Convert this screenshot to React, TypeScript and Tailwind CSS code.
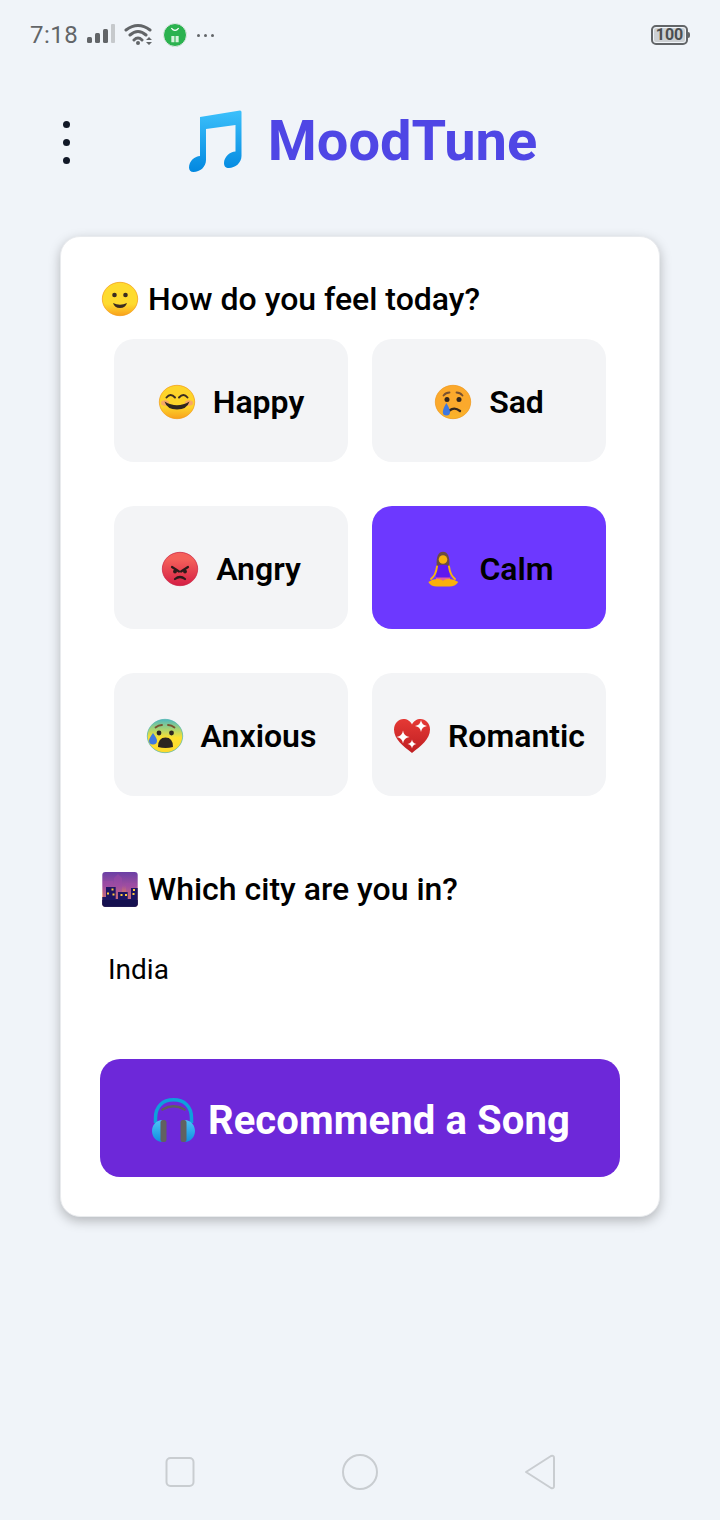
const ROBOTO = "font-['Roboto',sans-serif]";

function Face({ id, from, to, stroke, mid = 0.65, children }: { id: string; from: string; to: string; stroke: string; mid?: number; children: React.ReactNode }) {
  return (
    <svg viewBox="0 0 38 38" className="h-[38px] w-[38px] shrink-0">
      <defs>
        <linearGradient id={id} x1="0" y1="0" x2="0" y2="1">
          <stop offset="0" stopColor={from} />
          <stop offset={mid} stopColor={from} />
          <stop offset="1" stopColor={to} />
        </linearGradient>
      </defs>
      <ellipse cx="19" cy="19" rx="17.7" ry="16.7" fill={`url(#${id})`} stroke={stroke} strokeWidth="0.7" />
      {children}
    </svg>
  );
}

function Smile() {
  return (
    <Face id="smile" from="#fedb2f" to="#f9a11b" stroke="#f29a12">
      <circle cx="13.5" cy="15" r="2.3" fill="#3a2c20" />
      <circle cx="24.5" cy="15" r="2.3" fill="#3a2c20" />
      <path d="M12 23q7 3.500 14 0q-1.500 5-7 5t-7-5z" fill="#3a2c20" />
    </Face>
  );
}

function HappyFace() {
  return (
    <Face id="happy" from="#fdd42a" to="#f8a11c" stroke="#f29a12">
      <ellipse cx="7" cy="20" rx="4" ry="2.800" fill="#f59a7a" opacity="0.75" />
      <ellipse cx="31" cy="20" rx="4" ry="2.800" fill="#f59a7a" opacity="0.75" />
      <path d="M8.500 14.500q4-5 8.500 0M21 14.500q4.500-5 8.500 0" fill="none" stroke="#3a2c20" strokeWidth="2" strokeLinecap="round" />
      <path d="M6.500 18.500q12.500 7.500 25 0q-2.500 8-12.500 8t-12.500-8z" fill="#2f2620" />
    </Face>
  );
}

function SadFace() {
  return (
    <Face id="sad" from="#fba92c" to="#f9b52a" stroke="#ef9514">
      <path d="M9.500 12.500q2.500-3 6-3M28.500 12.500q-2.500-3-6-3" fill="none" stroke="#7a5230" strokeWidth="1.800" strokeLinecap="round" />
      <circle cx="13" cy="16.500" r="2.500" fill="#33261d" />
      <circle cx="25" cy="16.500" r="2.500" fill="#33261d" />
      <path d="M15.500 27.500q5-4 10.500 .5" fill="none" stroke="#33261d" strokeWidth="2.400" strokeLinecap="round" />
      <path d="M12.400 20q-3.600 6-3.600 9a3.600 3.600 0 0 0 7.200 0q0-3-3.600-9z" fill="#3f78e0" />
    </Face>
  );
}

function AngryFace() {
  return (
    <Face id="angry" from="#f4605a" to="#d51f45" stroke="#c8203f" mid={0.2}>
      <path d="M11 17l7 4.500M27 17l-7 4.500" stroke="#2c1a1a" strokeWidth="2.200" strokeLinecap="round" />
      <circle cx="14" cy="21.500" r="1.900" fill="#2c1a1a" />
      <circle cx="24" cy="21.500" r="1.900" fill="#2c1a1a" />
      <path d="M14 29q5-4 10 0" fill="none" stroke="#2c1a1a" strokeWidth="2.200" strokeLinecap="round" />
    </Face>
  );
}

function AnxiousFace() {
  return (
    <svg viewBox="0 0 38 38" className="h-[38px] w-[38px] shrink-0">
      <defs>
        <linearGradient id="anx" x1="0" y1="0" x2="0" y2="1">
          <stop offset="0" stopColor="#4fb8bd" />
          <stop offset="0.3" stopColor="#a8d473" />
          <stop offset="0.55" stopColor="#fde02f" />
          <stop offset="1" stopColor="#fdd92c" />
        </linearGradient>
      </defs>
      <ellipse cx="19" cy="19" rx="17.700" ry="16.700" fill="url(#anx)" stroke="#4fb3ae" strokeWidth="0.700" />
      <path d="M9.500 10.500q3-2.500 6.500-2.500M28.500 10.500q-3-2.500-6.500-2.500" fill="none" stroke="#7a5230" strokeWidth="1.800" strokeLinecap="round" />
      <circle cx="13" cy="16" r="2.400" fill="#2d2620" />
      <circle cx="25.500" cy="16" r="2.400" fill="#2d2620" />
      <path d="M12 30q0-9.500 7.500-9.500t7.500 9.500q-7.500 2-15 0z" fill="#2d2620" />
      <path d="M7 16q-4 5.500-4 7.500a4 4 0 0 0 8 0q0-2-4-7.500z" fill="#3f78e0" />
    </svg>
  );
}

function SparkleHeart() {
  const star = (x: number, y: number, r: number) =>
    `M${x} ${y - r}Q${x + r * 0.12} ${y - r * 0.12} ${x + r} ${y}Q${x + r * 0.12} ${y + r * 0.12} ${x} ${y + r}Q${x - r * 0.12} ${y + r * 0.12} ${x - r} ${y}Q${x - r * 0.12} ${y - r * 0.12} ${x} ${y - r}z`;
  return (
    <svg viewBox="0 0 38 38" className="h-[38px] w-[38px] shrink-0">
      <defs>
        <linearGradient id="heart" x1="0" y1="0" x2="0" y2="1">
          <stop offset="0" stopColor="#e53935" />
          <stop offset="1" stopColor="#bf1f22" />
        </linearGradient>
      </defs>
      <path d="M19 36C10 29 1 22 1 12.500C1 6.500 5.500 2 10.500 2C14 2 17.500 4 19 7.500C20.500 4 24 2 27.500 2C32.500 2 37 6.500 37 12.500C37 22 28 29 19 36z" fill="url(#heart)" />
      <path d={star(28, 9, 6)} fill="#fff" />
      <path d={star(10, 20, 6.500)} fill="#fff" />
      <path d={star(19, 27, 4.500)} fill="#fff" />
    </svg>
  );
}

function Meditate() {
  return (
    <svg viewBox="0 0 38 38" className="h-[38px] w-[38px] shrink-0">
      <path d="M12.700 16C12 6 14.500 1.700 19 1.700S26 6 25.300 16z" fill="#6d4c41" />
      <circle cx="19" cy="9.500" r="4.300" fill="#f6b40e" />
      <path d="M13 16q6-2.500 12 0l1 12H12z" fill="#5f18f0" />
      <path d="M12 27.500h14v3H12z" fill="#e05fa3" />
      <path d="M13 16.500Q12 25 7 29" fill="none" stroke="#f6b40e" strokeWidth="2" strokeLinecap="round" />
      <path d="M25 16.500Q26 25 31 29" fill="none" stroke="#f6b40e" strokeWidth="2" strokeLinecap="round" />
      <path d="M4.300 32q7-5 14.700-1.500Q26.700 27 34.300 32q-3 4.500-9 4.500h-12.500q-6 0-8.500-4.500z" fill="#fbb00b" />
    </svg>
  );
}

function City() {
  return (
    <svg viewBox="0 0 38 38" className="h-[38px] w-[38px] shrink-0">
      <defs>
        <linearGradient id="dusk" x1="0" y1="0" x2="0" y2="1">
          <stop offset="0" stopColor="#6a3fa5" />
          <stop offset="0.4" stopColor="#a04f9f" />
          <stop offset="0.75" stopColor="#f58f4a" />
        </linearGradient>
      </defs>
      <rect x="1.300" y="2" width="35.400" height="34.700" rx="3" fill="url(#dusk)" />
      <path d="M2 11h10v19H2zM25 13h10v17H25zM13 8l4-4 4 4v22h-8z" fill="#9c4aa6" opacity="0.55" />
      <path d="M1.300 27H5V17h9.700v12H17V22h9.700v7H30V18h6.700v15.700a3 3 0 0 1-3 3H4.300a3 3 0 0 1-3-3z" fill="#1d1463" />
      <path d="M1.300 30h35.400v3.700a3 3 0 0 1-3 3H4.300a3 3 0 0 1-3-3z" fill="#15104f" />
      <path d="M10.500 18.500h2v2h-2zM6 22.500h2v2H6zM11.500 23.500h2v2h-2zM19.500 24h2v2h-2zM24 24h2v2h-2zM32 19h2v2h-2zM31.500 23h2v2h-2z" fill="#ffc83d" />
    </svg>
  );
}

function NoteIcon() {
  return (
    <svg viewBox="0 0 60 64" className="h-[64px] w-[60px] shrink-0">
      <defs>
        <linearGradient id="note" x1="0" y1="0" x2="0" y2="1">
          <stop offset="0" stopColor="#3cc0fb" />
          <stop offset="1" stopColor="#0288e0" />
        </linearGradient>
      </defs>
      <path
        transform="translate(0 1)"
        d="M15 8L55 1.500Q56.500 1.500 56.500 3V47C56.500 54 50 59 44 59C40.500 59 39 57 39 54C39 48 45 42.500 50.500 42.500V16L21 20V51C21 58 15 63 8.500 63C5.500 63 4 61 4 58.500C4 52 10 47 15 47z"
        fill="url(#note)"
      />
    </svg>
  );
}

function Headphones() {
  return (
    <svg viewBox="0 0 46 46" className="h-[46px] w-[46px] shrink-0">
      <defs>
        <linearGradient id="cup" x1="0" y1="0" x2="0" y2="1">
          <stop offset="0" stopColor="#4fc3f7" />
          <stop offset="1" stopColor="#0f8fe0" />
        </linearGradient>
      </defs>
      <path d="M5.500 26V21C5.500 9 13 2.800 23.500 2.800S41.500 9 41.500 21V26" fill="none" stroke="#0ea0dc" strokeWidth="3.500" />
      <path d="M12.500 12.500Q23.500 6 34.500 12.500" fill="none" stroke="#5f5f5f" strokeWidth="2.500" strokeLinecap="round" />
      <path d="M12.500 23v22C6 45 2 39.500 2 34S6 23 12.500 23zM34.500 23v22c6.500 0 10.500-5.500 10.500-11S41 23 34.500 23z" fill="url(#cup)" />
      <rect x="10.500" y="23" width="6" height="22" rx="2.500" fill="#616161" />
      <rect x="30.500" y="23" width="6" height="22" rx="2.500" fill="#616161" />
    </svg>
  );
}

const moods = [
  { label: "Happy", icon: HappyFace, active: false },
  { label: "Sad", icon: SadFace, active: false },
  { label: "Angry", icon: AngryFace, active: false },
  { label: "Calm", icon: Meditate, active: true },
  { label: "Anxious", icon: AnxiousFace, active: false },
  { label: "Romantic", icon: SparkleHeart, active: false },
];

function StatusBar() {
  return (
    <div className="flex h-[70px] items-center pl-[30px] pr-[30px] text-[#626568]">
      <span className="text-[24px] leading-none tracking-[0.5px]">7:18</span>
      <svg viewBox="0 0 30 22" className="ml-[9px] h-[22px] w-[30px]">
        <rect x="0" y="13" width="5" height="6" rx="1.500" fill="#626568" />
        <rect x="8" y="9" width="5" height="10" rx="1.500" fill="#626568" />
        <rect x="16" y="5" width="5" height="14" rx="1.500" fill="#626568" />
        <rect x="24" y="0" width="4" height="19" rx="1" fill="#c6c9cc" />
      </svg>
      <svg viewBox="0 0 30 24" className="ml-[7px] h-[24px] w-[30px]">
        <path d="M2 7Q14-2 26 7M6 12Q14 5 22 12M10 17Q14 13 18 17" fill="none" stroke="#626568" strokeWidth="3" strokeLinecap="round" />
        <circle cx="14" cy="20" r="2" fill="#626568" />
        <path d="M22 17l3-3 3 3zM22 19h6l-3 3z" fill="#626568" />
      </svg>
      <div className="ml-[9px] flex h-[24px] w-[24px] items-center justify-center rounded-full border border-[#e5e8ea] bg-[#2bb24f]">
        <svg viewBox="0 0 24 24" className="h-[22px] w-[22px]">
          <path d="M8 4.500q4 5 8 0" fill="none" stroke="#fff" strokeWidth="1.300" />
          <path d="M8 13h3.400v7H8zM12.600 13H16v7h-3.400z" fill="#d6f3dc" />
        </svg>
      </div>
      <div className="ml-[10px] flex gap-[4px]">
        <span className="h-[3px] w-[3px] rounded-full bg-[#626568]" />
        <span className="h-[3px] w-[3px] rounded-full bg-[#626568]" />
        <span className="h-[3px] w-[3px] rounded-full bg-[#626568]" />
      </div>
      <div className="ml-auto flex items-center">
        <div className="flex h-[20px] w-[37px] items-center justify-center rounded-[5px] border-2 border-[#626568] p-[1px]">
          <span className="flex h-full w-full items-center justify-center rounded-[2px] bg-[#cdd0d3] text-[16px] font-bold leading-none text-[#4b4e51]">100</span>
        </div>
        <span className="h-[6px] w-[2px] rounded-r-sm bg-[#626568]" />
      </div>
    </div>
  );
}

export default function App() {
  return (
    <div className={`flex h-[1520px] w-[720px] flex-col overflow-hidden bg-[#f0f4f9] ${ROBOTO}`}>
      <StatusBar />

      {/* header */}
      <div className="relative flex h-[140px] items-center justify-center pl-[2px]">
        <div className="absolute left-[63px] top-[51px] flex flex-col gap-[11px]">
          <span className="h-[7px] w-[7px] rounded-full bg-[#111827]" />
          <span className="h-[7px] w-[7px] rounded-full bg-[#111827]" />
          <span className="h-[7px] w-[7px] rounded-full bg-[#111827]" />
        </div>
        <NoteIcon />
        <h1 className="ml-[23px] pt-[2px] text-[56px] font-bold leading-none text-[#4f46e5]">MoodTune</h1>
      </div>

      {/* card */}
      <div className="mx-[60px] mt-[26px] flex h-[981px] flex-col rounded-[20px] border border-[#e9ebee] bg-white px-[39px] pt-[39px] shadow-[0_4px_12px_rgba(0,0,0,0.25)]">
        <div className="ml-[1px] flex h-[46px] items-center gap-[9px] text-[32px] font-medium text-black">
          <Smile />
          <span className="leading-none">How do you feel today?</span>
        </div>

        <div className="mx-[14px] mt-[17px] grid grid-cols-2 gap-x-[24px] gap-y-[44px]">
          {moods.map((m) => (
            <div
              key={m.label}
              className={`flex h-[123px] items-center justify-center gap-[17px] rounded-[20px] pt-[2px] ${m.active ? "bg-[#6d38ff]" : "bg-[#f3f4f6]"}`}
            >
              <m.icon />
              <span className="text-[32px] font-semibold leading-none text-black">{m.label}</span>
            </div>
          ))}
        </div>

        <div className="ml-[1px] mt-[70px] flex h-[46px] items-center gap-[9px] text-[32px] font-medium text-black">
          <City />
          <span className="leading-none">Which city are you in?</span>
        </div>

        <div className="mt-[44px] pl-[8px] text-[28px] leading-none text-black">India</div>

        <div className="mt-[75px] flex h-[118px] items-center justify-center gap-[12px] rounded-[20px] bg-[#6d28d9] pt-[3px]">
          <Headphones />
          <span className="pt-[2px] text-[40px] font-bold leading-none tracking-[0.12px] text-white">Recommend a Song</span>
        </div>
      </div>

      {/* android nav */}
      <div className="mt-auto flex h-[66px] items-start justify-between pl-[165px] pr-[164px]">
        <svg viewBox="0 0 30 36" className="h-[36px] w-[30px]">
          <rect x="1.500" y="4" width="27" height="28" rx="4" fill="none" stroke="#c9cdd1" strokeWidth="2" />
        </svg>
        <svg viewBox="0 0 36 36" className="h-[36px] w-[36px]">
          <circle cx="18" cy="18" r="17" fill="none" stroke="#c9cdd1" strokeWidth="2" />
        </svg>
        <svg viewBox="0 0 32 36" className="h-[36px] w-[32px]">
          <path d="M2 18L27 2Q30 1 30 4V32Q30 35 27 34Z" fill="none" stroke="#c9cdd1" strokeWidth="2" strokeLinejoin="round" />
        </svg>
      </div>
    </div>
  );
}
